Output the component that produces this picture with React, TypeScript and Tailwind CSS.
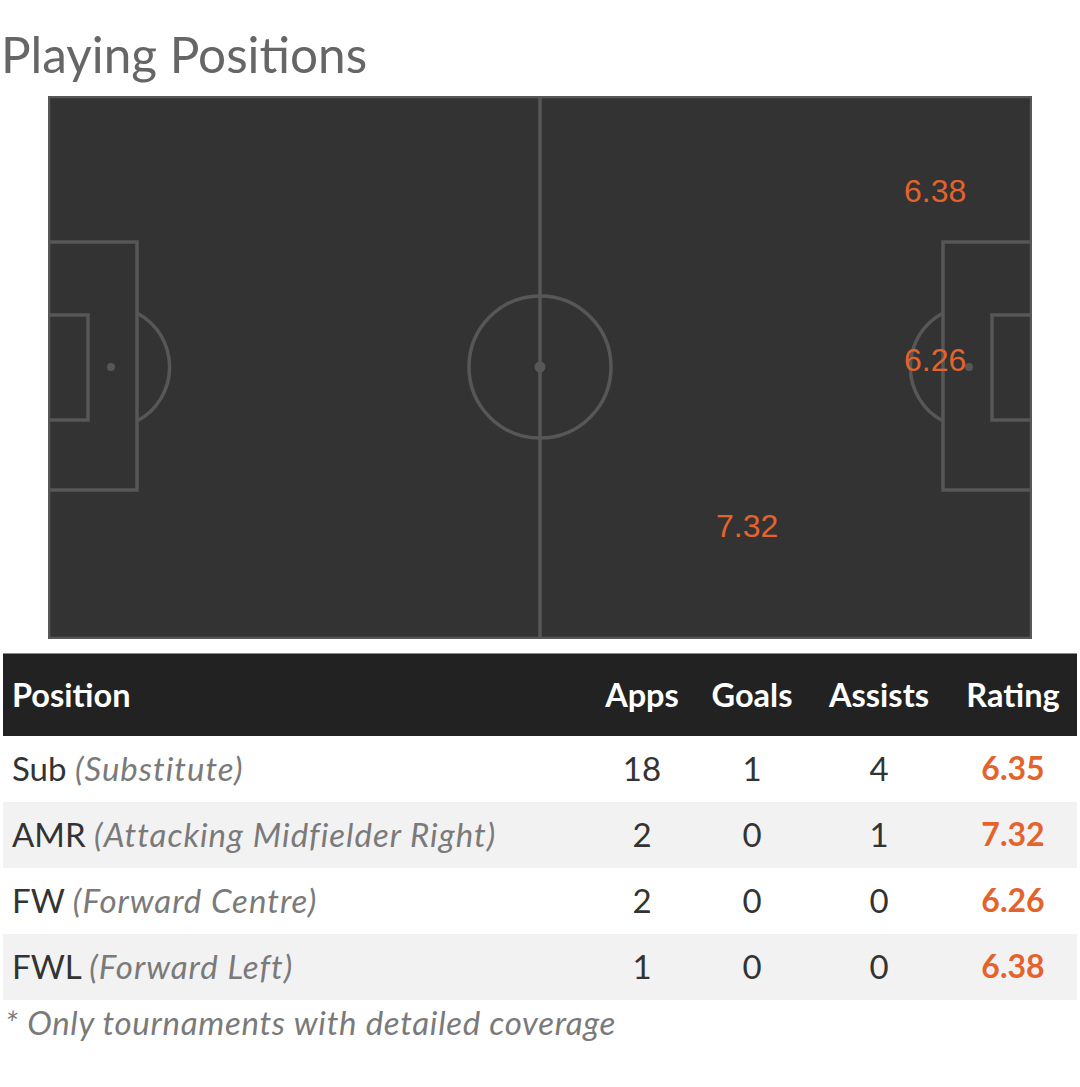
import React from "react";

type Row = {
    code: string;
    name: string;
    apps: number;
    goals: number;
    assists: number;
    rating: string;
};

const rows: Row[] = [
    { code: "Sub", name: "Substitute", apps: 18, goals: 1, assists: 4, rating: "6.35" },
    { code: "AMR", name: "Attacking Midfielder Right", apps: 2, goals: 0, assists: 1, rating: "7.32" },
    { code: "FW", name: "Forward Centre", apps: 2, goals: 0, assists: 0, rating: "6.26" },
    { code: "FWL", name: "Forward Left", apps: 1, goals: 0, assists: 0, rating: "6.38" },
];

const grid = "grid grid-cols-[586px_106px_114px_140px_128px]";

function Pitch() {
    const line = "#575757";
    return (
        <div className="relative mx-auto w-[984px] h-[543px] bg-[#333333]">
            <svg
                className="absolute inset-0"
                width="984"
                height="543"
                viewBox="0 0 984 543"
                fill="none"
                stroke={line}
                strokeWidth="3.5"
            >
                <rect x="1" y="1" width="982" height="541" strokeWidth="2.5" />
                <line x1="492" y1="0" x2="492" y2="543" />
                <circle cx="492" cy="271" r="71" />
                <circle cx="492" cy="271" r="5.5" fill={line} stroke="none" />

                {/* left end */}
                <path d="M0 146 H89 V394 H0" />
                <path d="M0 219 H40 V324 H0" />
                <circle cx="63" cy="271" r="4" fill={line} stroke="none" />
                <path d="M89 217 A61 61 0 0 1 89 325" />

                {/* right end */}
                <path d="M984 146 H895 V394 H984" />
                <path d="M984 219 H944 V324 H984" />
                <circle cx="921" cy="271" r="4" fill={line} stroke="none" />
                <path d="M895 217 A61 61 0 0 0 895 325" />
            </svg>

            <span className="absolute left-[856px] top-[79px] text-[32px] leading-none text-[#e4632d] font-['Liberation_Sans',Arial,sans-serif]">
                6.38
            </span>
            <span className="absolute left-[856px] top-[248px] text-[32px] leading-none text-[#e4632d] font-['Liberation_Sans',Arial,sans-serif]">
                6.26
            </span>
            <span className="absolute left-[668px] top-[414px] text-[32px] leading-none text-[#e4632d] font-['Liberation_Sans',Arial,sans-serif]">
                7.32
            </span>
        </div>
    );
}

export default function App() {
    return (
        <div className="w-[1080px] min-h-[1087px] bg-white font-['Lato','Noto_Sans',sans-serif] text-[#333333]">
            <h1 className="pt-[25px] pl-[1px] text-[49.5px] leading-[1.2] text-[#666666]">
                Playing Positions
            </h1>

            <div className="mt-[12px]">
                <Pitch />
            </div>

            <div className="mt-[14px] mx-[3px] border-t border-[#8a8a8a]">
                <div className={`${grid} h-[82px] items-center bg-[#222222] text-white font-bold text-[32.5px]`}>
                    <div className="pl-[9px]">Position</div>
                    <div className="text-center">Apps</div>
                    <div className="text-center">Goals</div>
                    <div className="text-center">Assists</div>
                    <div className="text-center">Rating</div>
                </div>

                {rows.map(function (row, i) {
                    return (
                        <div
                            key={row.code}
                            className={`${grid} h-[66px] items-center pb-[2px] text-[33px] ${
                                i % 2 === 1 ? "bg-[#f2f2f2]" : "bg-white"
                            }`}
                        >
                            <div className="pl-[9px] whitespace-nowrap">
                                {row.code}{" "}
                                <span className="italic tracking-[1px] text-[#7a7a7a]">
                                    ({row.name})
                                </span>
                            </div>
                            <div className="text-center">{row.apps}</div>
                            <div className="text-center">{row.goals}</div>
                            <div className="text-center">{row.assists}</div>
                            <div className="text-center font-bold text-[32px] text-[#e4632d]">
                                {row.rating}
                            </div>
                        </div>
                    );
                })}
            </div>

            <div className="pl-[5px] pt-[1px] text-[33px] leading-[42px] italic tracking-[0.7px] text-[#7a7a7a]">
                * Only tournaments with detailed coverage
            </div>
        </div>
    );
}
